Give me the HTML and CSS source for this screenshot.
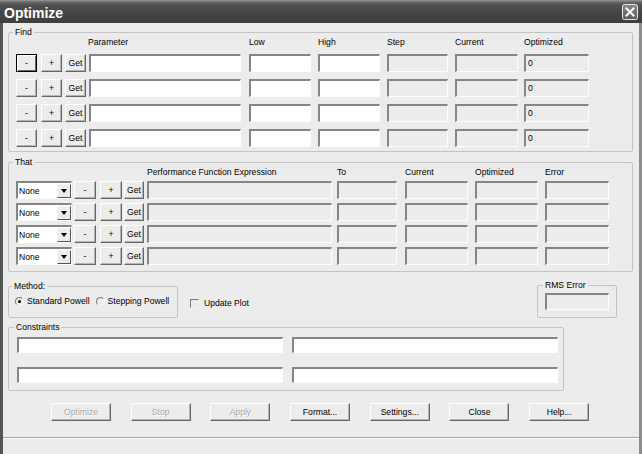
FILE: index.html
```html
<!DOCTYPE html>
<html>
<head>
<meta charset="utf-8">
<title>Optimize</title>
<link rel="stylesheet" href="styles.css">
</head>
<body>
<div class="window">
  <div class="titlebar">
    <span class="title">Optimize</span>
    <span class="close-btn">
      <svg width="16" height="16" viewBox="0 0 16 16">
        <defs>
          <linearGradient id="cg" x1="0" y1="0" x2="0" y2="1">
            <stop offset="0" stop-color="#8a8a8a"/>
            <stop offset="1" stop-color="#5a5a5a"/>
          </linearGradient>
        </defs>
        <rect x="0.5" y="0.5" width="15" height="15" rx="2" fill="url(#cg)" stroke="#e8e8e8"/>
        <path d="M4.5 4.5 L11.5 11.5 M11.5 4.5 L4.5 11.5" stroke="#fff" stroke-width="2" stroke-linecap="square"/>
      </svg>
    </span>
  </div>
  <div class="client">
    <fieldset class="group find">
      <legend>Find</legend>
      <div class="find-grid">
        <span></span><span></span><span></span>
        <span class="hdr hdr-param">Parameter</span>
        <span class="hdr">Low</span>
        <span class="hdr">High</span>
        <span class="hdr">Step</span>
        <span class="hdr">Current</span>
        <span class="hdr">Optimized</span>

        <button class="btn sq focus">-</button><button class="btn sq">+</button><button class="btn sq">Get</button>
        <span class="edit w-param"></span><span class="edit w-62"></span><span class="edit w-62"></span>
        <span class="edit dis w-61"></span><span class="edit dis w-63"></span><span class="edit dis w-65">0</span>

        <button class="btn sq">-</button><button class="btn sq">+</button><button class="btn sq">Get</button>
        <span class="edit w-param"></span><span class="edit w-62"></span><span class="edit w-62"></span>
        <span class="edit dis w-61"></span><span class="edit dis w-63"></span><span class="edit dis w-65">0</span>

        <button class="btn sq">-</button><button class="btn sq">+</button><button class="btn sq">Get</button>
        <span class="edit w-param"></span><span class="edit w-62"></span><span class="edit w-62"></span>
        <span class="edit dis w-61"></span><span class="edit dis w-63"></span><span class="edit dis w-65">0</span>

        <button class="btn sq">-</button><button class="btn sq">+</button><button class="btn sq">Get</button>
        <span class="edit w-param"></span><span class="edit w-62"></span><span class="edit w-62"></span>
        <span class="edit dis w-61"></span><span class="edit dis w-63"></span><span class="edit dis w-65">0</span>
      </div>
    </fieldset>

    <fieldset class="group that">
      <legend>That</legend>
      <div class="that-grid">
        <span></span><span></span><span></span><span></span>
        <span class="hdr">Performance Function Expression</span>
        <span class="hdr">To</span>
        <span class="hdr">Current</span>
        <span class="hdr">Optimized</span>
        <span class="hdr">Error</span>

        <span class="combo"><span class="combo-text">None</span><span class="arrow"><span class="tri"></span></span></span>
        <button class="btn w-22">-</button><button class="btn w-22">+</button><button class="btn w-20">Get</button>
        <span class="edit dis w-185"></span><span class="edit dis w-60"></span><span class="edit dis w-63"></span><span class="edit dis w-63"></span><span class="edit dis w-64"></span>

        <span class="combo"><span class="combo-text">None</span><span class="arrow"><span class="tri"></span></span></span>
        <button class="btn w-22">-</button><button class="btn w-22">+</button><button class="btn w-20">Get</button>
        <span class="edit dis w-185"></span><span class="edit dis w-60"></span><span class="edit dis w-63"></span><span class="edit dis w-63"></span><span class="edit dis w-64"></span>

        <span class="combo"><span class="combo-text">None</span><span class="arrow"><span class="tri"></span></span></span>
        <button class="btn w-22">-</button><button class="btn w-22">+</button><button class="btn w-20">Get</button>
        <span class="edit dis w-185"></span><span class="edit dis w-60"></span><span class="edit dis w-63"></span><span class="edit dis w-63"></span><span class="edit dis w-64"></span>

        <span class="combo"><span class="combo-text">None</span><span class="arrow"><span class="tri"></span></span></span>
        <button class="btn w-22">-</button><button class="btn w-22">+</button><button class="btn w-20">Get</button>
        <span class="edit dis w-185"></span><span class="edit dis w-60"></span><span class="edit dis w-63"></span><span class="edit dis w-63"></span><span class="edit dis w-64"></span>
      </div>
    </fieldset>

    <div class="method-row">
      <fieldset class="group method">
        <legend>Method:</legend>
        <div class="radios">
          <span class="radio checked"></span><span class="radio-label">Standard Powell</span>
          <span class="radio second"></span><span class="radio-label">Stepping Powell</span>
        </div>
      </fieldset>
      <div class="check">
        <span class="checkbox"></span><span>Update Plot</span>
      </div>
      <fieldset class="group rms">
        <legend>RMS Error</legend>
        <span class="edit dis w-64 rms-box"></span>
      </fieldset>
    </div>

    <fieldset class="group constraints">
      <legend>Constraints</legend>
      <div class="cons-grid">
        <span class="edit"></span><span class="edit"></span>
        <span class="edit"></span><span class="edit"></span>
      </div>
    </fieldset>

    <div class="buttons">
      <button class="btn dlg disabled">Optimize</button>
      <button class="btn dlg disabled">Stop</button>
      <button class="btn dlg disabled">Apply</button>
      <button class="btn dlg">Format...</button>
      <button class="btn dlg">Settings...</button>
      <button class="btn dlg">Close</button>
      <button class="btn dlg">Help...</button>
    </div>

    <div class="statusbar"></div>
  </div>
</div>
</body>
</html>
```
FILE: styles.css
```css
* { box-sizing: border-box; }

body {
  margin: 0;
  font-family: "Liberation Sans", Arial, sans-serif;
  font-size: 8.6px;
  color: #000;
  background: #ececec;
}

.window {
  width: 642px;
  height: 454px;
  display: flex;
  flex-direction: column;
  background: #ececec;
  overflow: hidden;
}

.titlebar {
  height: 23px;
  flex: none;
  display: flex;
  align-items: flex-start;
  justify-content: space-between;
  padding: 4px 4px 0 4px;
  background: linear-gradient(#9a9a9a 0, #6a6a6a 2px, #505050 5px, #454545 14px, #3e3e3e 23px);
}

.title {
  color: #fff;
  font-weight: bold;
  font-size: 14px;
  line-height: 17px;
  margin-top: 1px;
}

.close-btn {
  width: 16px;
  height: 16px;
  display: block;
}
.close-btn svg { display: block; }

.client {
  flex: 1;
  display: flex;
  flex-direction: column;
  border-left: 3px solid #555;
  border-right: 3px solid #8c8c8c;
}

/* group boxes */
.group {
  margin: 0;
  border: 1px solid #c4c4c4;
  border-radius: 2px;
  min-width: 0;
}
.group legend {
  padding: 0 2px;
  line-height: 11px;
  margin-left: -3px;
}

.hdr {
  line-height: 10px;
  white-space: nowrap;
}

/* sunken edit boxes */
.edit {
  display: block;
  border-style: solid;
  border-width: 2px 1px 1px 2px;
  border-color: #858585 #fdfdfd #fdfdfd #858585;
  background: #fff;
  padding-left: 2px;
  line-height: 14px;
}
.edit.dis { background: #ececec; }

/* raised buttons */
.btn {
  font: inherit;
  color: #000;
  padding: 0;
  margin: 0;
  border: 1px solid;
  border-color: #fff #666 #666 #fff;
  box-shadow: inset -1px -1px 0 #b4b4b4;
  background: #ececec;
  text-align: center;
  line-height: 14px;
  height: 18px;
}
.btn.focus {
  border-color: #000;
  box-shadow: inset 1px 1px 0 #fff, inset -1px -1px 0 #666;
}
.btn.disabled {
  color: #a6a6a6;
  text-shadow: 1px 1px 0 #fff;
}

.sq { width: 21px; }
.w-20 { width: 20px; }
.w-22 { width: 22px; }
.w-60 { width: 60px; }
.w-61 { width: 61px; }
.w-62 { width: 62px; }
.w-63 { width: 63px; }
.w-64 { width: 64px; }
.w-65 { width: 65px; }
.w-185 { width: 185px; }
.w-param { width: 152px; }

/* Find */
.find {
  margin: 4px 0 0 5px;
  width: 625px;
  padding: 0 6px 4px 7px;
}
.find-grid {
  margin-top: -1px;
  display: grid;
  grid-template-columns: 25px 24px 24px 160px 69px 69px 68px 69px 65px;
  grid-template-rows: 10px;
  grid-auto-rows: 18px;
  row-gap: 7px;
}
.hdr-param { margin-left: -1px; }

/* That */
.that {
  margin: 5px 0 0 5px;
  width: 625px;
  padding: 0 6px 6px 7px;
}
.that-grid {
  margin-top: -1px;
  display: grid;
  grid-template-columns: 58px 26px 24px 23px 190px 68px 70px 70px 64px;
  grid-template-rows: 10px;
  grid-auto-rows: 18px;
  row-gap: 4px;
}

.combo {
  width: 56px;
  height: 18px;
  display: flex;
  align-items: center;
  border-style: solid;
  border-width: 2px 1px 1px 2px;
  border-color: #858585 #fdfdfd #fdfdfd #858585;
  background: #fff;
}
.combo-text { padding-left: 1px; line-height: 12px; }
.arrow {
  margin-left: auto;
  width: 14px;
  height: 14px;
  display: flex;
  align-items: center;
  justify-content: center;
  border: 1px solid;
  border-color: #f4f4f4 #555 #555 #f4f4f4;
  background: #ececec;
}
.tri {
  width: 0;
  height: 0;
  border-left: 3px solid transparent;
  border-right: 3px solid transparent;
  border-top: 4px solid #000;
}

/* Method row */
.method-row {
  margin-top: 8px;
  display: flex;
  align-items: flex-start;
}
.method {
  margin: 1px 0 0 5px;
  width: 170px;
  padding: 3px 2px 10px 6px;
}
.radios {
  display: flex;
  align-items: center;
  line-height: 12px;
  height: 12px;
  white-space: nowrap;
}
.radio-label { flex: none; }
.radio {
  flex: none;
  width: 9px;
  height: 9px;
  border-radius: 50%;
  border: 1px solid;
  border-color: #777 #f4f4f4 #f4f4f4 #777;
  display: flex;
  align-items: center;
  justify-content: center;
  margin-right: 3px;
}
.radio.checked::after {
  content: "";
  width: 3px;
  height: 3px;
  border-radius: 50%;
  background: #000;
}
.radio.second { margin-left: 6px; }

.check {
  margin: 17px 0 0 12px;
  display: flex;
  align-items: center;
  gap: 5px;
  line-height: 12px;
  white-space: nowrap;
}
.checkbox {
  width: 9px;
  height: 9px;
  border-style: solid;
  border-width: 1px;
  border-color: #777 #f4f4f4 #f4f4f4 #777;
}

.rms {
  margin: 0 22px 0 auto;
  width: 80px;
  padding: 2px 5px 7px 7px;
}
.rms legend { margin-left: -2px; }
.rms-box { height: 17px; }

/* Constraints */
.constraints {
  margin: 4px 0 0 5px;
  width: 556px;
  padding: 4px 5px 7px 8px;
}
.cons-grid {
  display: grid;
  grid-template-columns: 266px 266px;
  column-gap: 9px;
  grid-auto-rows: 16px;
  row-gap: 14px;
}

/* Dialog buttons */
.buttons {
  margin-top: 12px;
  display: flex;
  gap: 19.7px;
  padding-left: 48px;
}
.dlg { width: 60px; }

.statusbar {
  margin-top: auto;
  height: 17px;
  border-top: 1px solid #a4a4a4;
  box-shadow: inset 0 1px 0 #fff;
  background: #ececec;
}
```
